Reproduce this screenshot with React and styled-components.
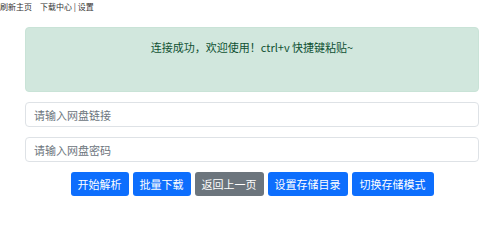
import React from 'react'
import styled, { createGlobalStyle } from 'styled-components'

const GlobalStyle = createGlobalStyle`
  body {
    margin: 0;
    background: #fff;
    font-family: "Noto Sans CJK SC", "Liberation Sans", sans-serif;
    color: #212529;
  }
  * { box-sizing: border-box; }
`

const Nav = styled.div`
  display: flex;
  gap: 8px;
  height: 14px;
  padding-top: 1px;
  font-size: 8px;
  line-height: 12px;
  color: #333;
`

const NavLink = styled.span``

const Main = styled.div`
  margin: 13px 21px 0 25px;
  display: flex;
  flex-direction: column;
`

const Alert = styled.div`
  height: 65px;
  padding-top: 12px;
  background: #d1e7dd;
  border: 1px solid #c9e3d7;
  border-radius: 4px;
  color: #0f5132;
  font-size: 11px;
  line-height: 14px;
  text-align: center;
`

const Input = styled.input`
  height: 25px;
  margin-top: ${(p) => p.top}px;
  padding: 0 8px;
  border: 1px solid #dee2e6;
  border-radius: 4px;
  font-family: inherit;
  font-size: 11px;
  color: #212529;
  outline: none;
  &::placeholder {
    color: #6c757d;
  }
`

const Buttons = styled.div`
  display: flex;
  justify-content: center;
  gap: 4px;
  margin-top: 10px;
`

const Button = styled.button`
  height: 24px;
  padding: 0 ${(p) => (p.wide ? 8 : 7)}px;
  border: none;
  border-radius: 3px;
  background: ${(p) => (p.secondary ? '#6c757d' : '#0d6efd')};
  color: #fff;
  font-family: inherit;
  font-size: 11px;
  line-height: 24px;
  cursor: pointer;
`

const App = () => {
  return (
    <>
      <GlobalStyle />
      <Nav>
        <NavLink>刷新主页</NavLink>
        <NavLink>下载中心 | 设置</NavLink>
      </Nav>
      <Main>
        <Alert>连接成功，欢迎使用！ctrl+v 快捷键粘贴~</Alert>
        <Input top={10} placeholder="请输入网盘链接" />
        <Input top={10} placeholder="请输入网盘密码" />
        <Buttons>
          <Button>开始解析</Button>
          <Button>批量下载</Button>
          <Button secondary>返回上一页</Button>
          <Button>设置存储目录</Button>
          <Button wide>切换存储模式</Button>
        </Buttons>
      </Main>
    </>
  )
}

export default App
